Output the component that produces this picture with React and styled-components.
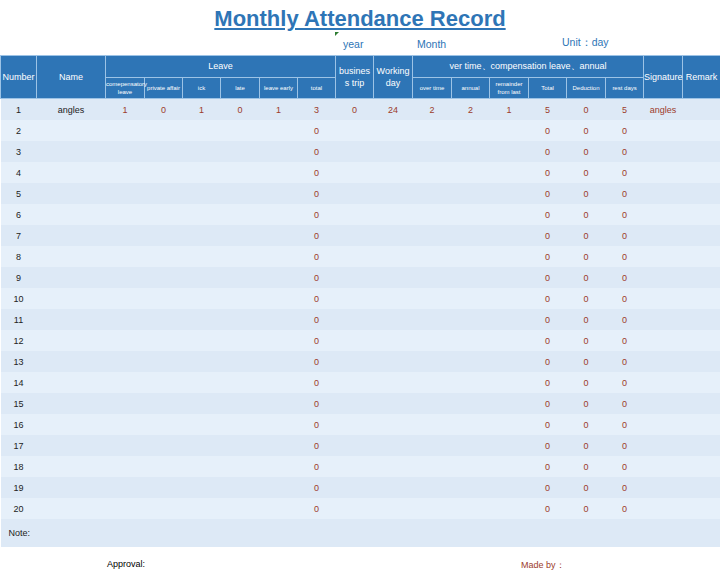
import styled, { createGlobalStyle } from 'styled-components'

const Global = createGlobalStyle`
  body { margin: 0; background: #fff; font-family: "Liberation Sans", Arial, sans-serif; }
`
const Page = styled.div`width:720px;height:572px;overflow:hidden;`
const Title = styled.h1`
  margin:0;height:32px;display:flex;align-items:flex-end;justify-content:center;
  font-size:22px;font-weight:bold;color:#2e75b6;text-decoration:underline;text-underline-offset:2px;
  padding-left:0;
`
const Meta = styled.div`
  position:relative;height:23px;font-size:10.5px;color:#2e75b6;display:flex;align-items:flex-end;padding-bottom:1px;box-sizing:border-box;
  span{position:absolute;bottom:5px}
`
const Mark = styled.i`position:absolute;left:335px;top:0;width:0;height:0;border-top:4px solid #2e7d32;border-right:4px solid transparent;`
const Table = styled.table`
  width:720px;border-collapse:collapse;table-layout:fixed;font-size:9px;
`
const Th = styled.th`
  background:#2e75b6;color:#fff;font-weight:normal;border:1px solid #9cc3e6;
  font-size:${p=>p.small?'6px':'9px'};height:${p=>p.tall?'42px':'20px'};padding:0;line-height:1.35;
`
const Tr = styled.tr`background:${p=>p.odd?'#dde9f6':'#e6f0fa'};`
const Td = styled.td`
  height:21px;padding:0;text-align:center;color:${p=>p.red?'#9c3b2b':'#222'};
`
const NoteCell = styled.td`height:26px;padding-left:8px;color:#222;`
const Footer = styled.div`
  position:relative;height:30px;font-size:9px;
  span{position:absolute;top:12px}
`

const widths=[36,69,39,38,38,39,38,38,38,39,39,38,39,38,39,38,39,38]
const data=[
  ['1','angles','1','0','1','0','1','3','0','24','2','2','1','5','0','5','angles',''],
]
for(let i=2;i<=20;i++){const r=Array(18).fill('');r[0]=String(i);r[7]='0';r[13]='0';r[14]='0';r[15]='0';data.push(r)}

export default function App(){
  return(
    <Page>
      <Global/>
      <Title>Monthly Attendance Record</Title>
      <Meta>
        <Mark/>
        <span style={{left:343}}>year</span>
        <span style={{left:417}}>Month</span>
        <span style={{left:562}}>Unit：day</span>
      </Meta>
      <Table>
        <colgroup>{widths.map((w,i)=><col key={i} style={{width:w}}/>)}</colgroup>
        <thead>
          <tr>
            <Th rowSpan={2} tall>Number</Th>
            <Th rowSpan={2} tall>Name</Th>
            <Th colSpan={6}>Leave</Th>
            <Th rowSpan={2} tall>busines<br/>s trip</Th>
            <Th rowSpan={2} tall>Working<br/>day</Th>
            <Th colSpan={6}>ver time、compensation leave、annual</Th>
            <Th rowSpan={2} tall>Signature</Th>
            <Th rowSpan={2} tall>Remark</Th>
          </tr>
          <tr>
            {['comepensatory leave','private affair','ick','late','leave early','total'].map(t=><Th key={t} small>{t}</Th>)}
            {['over time','annual','remainder from last','Total','Deduction','rest days'].map(t=><Th key={t} small>{t}</Th>)}
          </tr>
        </thead>
        <tbody>
          {data.map((r,i)=>(
            <Tr key={i} odd={i%2===0}>
              {r.map((c,j)=><Td key={j} red={j>=2&&j!==9||(i===0&&j===9)}>{c}</Td>)}
            </Tr>
          ))}
          <Tr odd><NoteCell colSpan={18}>Note:</NoteCell></Tr>
        </tbody>
      </Table>
      <Footer>
        <span style={{left:107}}>Approval:</span>
        <span style={{left:521,color:'#9c3b2b'}}>Made by：</span>
      </Footer>
    </Page>
  )
}
